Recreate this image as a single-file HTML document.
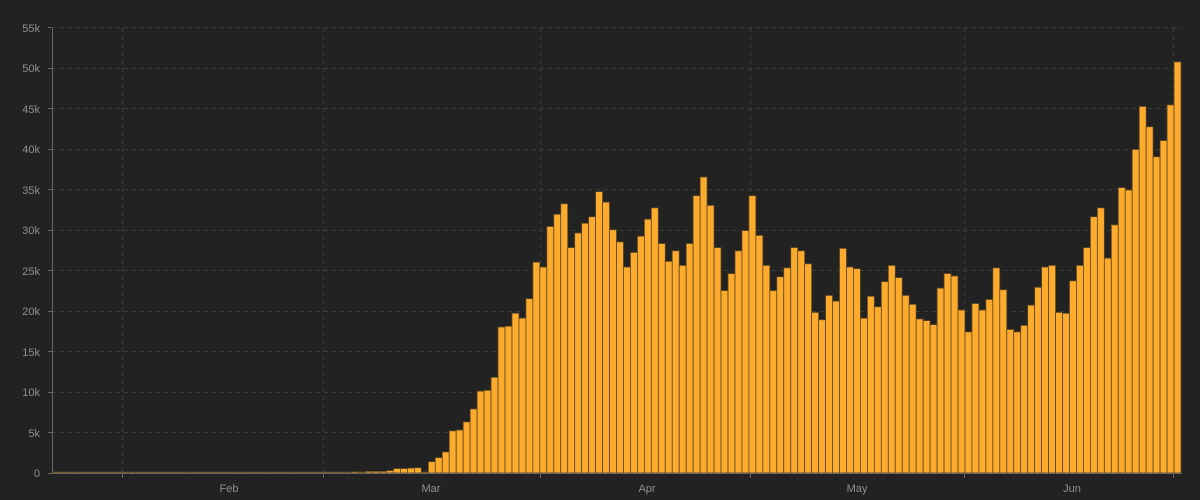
<!DOCTYPE html>
<html><head><meta charset="utf-8"><style>
html,body{margin:0;padding:0;background:#222;}
svg{display:block;}
text{font-family:"Liberation Sans",sans-serif;font-size:11px;fill:#8f8f8f;}
</style></head><body>
<svg id="c" width="1200" height="500" viewBox="0 0 1200 500">
<rect width="1200" height="500" fill="#222"/>
<g id="grid" stroke="#3c3c3c" stroke-width="1" stroke-dasharray="4,4"></g>
<g id="bars"></g>
<g stroke="#666" stroke-width="1">
<line x1="52.5" y1="28" x2="52.5" y2="473"/>
<line x1="52" y1="473.5" x2="1182" y2="473.5"/>
</g>
<g id="ticks" stroke="#666" stroke-width="1"></g>
<g id="labels">
<text x="40" y="477" text-anchor="end">0</text>
<text x="40" y="437" text-anchor="end">5k</text>
<text x="40" y="396" text-anchor="end">10k</text>
<text x="40" y="356" text-anchor="end">15k</text>
<text x="40" y="315" text-anchor="end">20k</text>
<text x="40" y="275" text-anchor="end">25k</text>
<text x="40" y="234" text-anchor="end">30k</text>
<text x="40" y="194" text-anchor="end">35k</text>
<text x="40" y="153" text-anchor="end">40k</text>
<text x="40" y="113" text-anchor="end">45k</text>
<text x="40" y="72" text-anchor="end">50k</text>
<text x="40" y="32" text-anchor="end">55k</text>
<text x="229" y="492" text-anchor="middle">Feb</text>
<text x="431" y="492" text-anchor="middle">Mar</text>
<text x="647" y="492" text-anchor="middle">Apr</text>
<text x="857" y="492" text-anchor="middle">May</text>
<text x="1072" y="492" text-anchor="middle">Jun</text>
</g>
</svg>
<script>
var NS="http://www.w3.org/2000/svg";
function el(p,t,a){var e=document.createElementNS(NS,t);for(var k in a)e.setAttribute(k,a[k]);p.appendChild(e);return e;}
var y0=473, per=446/55;
var grid=document.getElementById('grid');
for(var i=1;i<=11;i++){var y=Math.round(y0-i*5*per)+0.5;el(grid,'line',{x1:52,y1:y,x2:1182,y2:y});}
var vt=[122,323,540,750,964,1173];
vt.forEach(function(x){el(grid,'line',{x1:x+0.5,y1:28,x2:x+0.5,y2:473});el(document.getElementById('ticks'),'line',{x1:x+0.5,y1:473,x2:x+0.5,y2:478});});
[48].forEach(function(){});
for(var i=0;i<=11;i++){var y=Math.round(y0-i*5*per)+0.5;el(document.getElementById('ticks'),'line',{x1:48,y1:y,x2:52,y2:y});}
var v=[];
for(var i=0;i<43;i++)v.push(i<30?0.02:0.05);
v=v.concat([0.15,0.1,0.2,0.2,0.2,0.3,0.55,0.55,0.6,0.65,0.1,1.4,1.9,2.6,5.2,5.3,6.3,7.9,10.1,10.2,11.8,18.0,18.1,19.7,19.1,21.5,26.0,25.4,30.4,31.9,33.2,27.8,29.6,30.8,31.6,34.7,33.4,30.0,28.5,
25.4,27.2,29.2,31.3,32.7,28.3,26.1,27.4,25.6,28.3,34.2,36.5,33,27.8,22.5,24.6,27.4,29.9,34.2,29.3,25.6,22.5,24.2,25.3,27.8,27.4,25.8,19.8,18.9,21.9,21.2,27.7,25.4,25.2,19.1,21.8,20.5,23.6,25.6,24.1,21.9,20.8,19.0,18.8,18.3,22.8,24.6,24.3,20.1,17.4,20.9,20.1,21.4,25.3,22.6,17.7,17.4,18.2,20.7,22.9,25.4,25.6,19.8,19.7,23.7,25.6,27.8,31.6,32.7,26.5,30.6,35.2,34.9,39.9,45.2,42.7,39.0,41.0,45.4,50.7]);
var bars=document.getElementById('bars');
var w=(1181-52)/v.length;
for(var i=0;i<v.length;i++){
 var x=52+i*w, h=Math.max(1,v[i]*per);
 el(bars,'rect',{x:x.toFixed(2),y:(y0-h).toFixed(2),width:w.toFixed(2),height:h.toFixed(2),fill:'#fdab2d',stroke:'#5a4626','stroke-width':0.8});
}
</script>
</body></html>
